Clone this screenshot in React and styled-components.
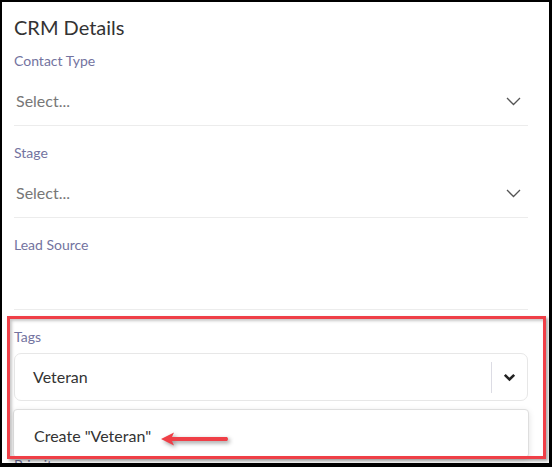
import React from 'react';
import styled, { createGlobalStyle } from 'styled-components';

const GlobalStyle = createGlobalStyle`
  html, body {
    margin: 0;
    padding: 0;
    background: #fff;
  }
  body {
    font-family: Lato, "Noto Sans", sans-serif;
  }
`;

const Frame = styled.div`
  position: relative;
  box-sizing: border-box;
  width: 552px;
  height: 467px;
  overflow: hidden;
  background: #fff;
  border-style: solid;
  border-color: #000;
  border-width: 2px 3px 4px 2px;
  padding: 0 21px 0 12px;
`;

const Title = styled.h2`
  margin: 0 0 14px;
  padding-top: 14px;
  font-size: 20px;
  line-height: 23px;
  font-weight: 400;
  color: #333;
`;

const Field = styled.div`
  position: relative;
  margin-top: ${(p) => p.$gap}px;
`;

const Label = styled.div`
  font-size: 14px;
  line-height: 16px;
  color: #7373a0;
`;

const Control = styled.div`
  display: flex;
  align-items: center;
  justify-content: space-between;
  height: 18px;
  padding: 23px 7px 15px 2px;
  border-bottom: 1px solid #ececec;
`;

const Placeholder = styled.span`
  font-size: 16px;
  line-height: 18px;
  color: #777;
`;

const SelectWrap = styled.div`
  position: relative;
  margin-top: 8px;
`;

const SelectBox = styled.div`
  display: flex;
  align-items: center;
  box-sizing: border-box;
  height: 48px;
  padding-left: 18px;
  border: 1px solid #e7e7e7;
  border-radius: 7px;
  background: #fff;
`;

const Value = styled.span`
  flex: 1;
  font-size: 16px;
  line-height: 18px;
  color: #333;
`;

const Separator = styled.span`
  width: 1px;
  height: 31px;
  background: #dcdce4;
`;

const Indicator = styled.span`
  display: flex;
  align-items: center;
  justify-content: center;
  width: 35px;
`;

const Menu = styled.div`
  position: absolute;
  top: calc(100% + 8px);
  left: -1px;
  right: -1px;
  padding-top: 4px;
  background: #fff;
  border: 1px solid #dedede;
  border-radius: 4px;
  box-shadow: 0 2px 6px rgba(0, 0, 0, 0.12);
  z-index: 2;
`;

const Option = styled.div`
  padding: 13px 20px 12px;
  font-size: 16px;
  line-height: 18px;
  color: #333;
`;

const Highlight = styled.div`
  position: absolute;
  left: 5px;
  top: 314px;
  width: 539px;
  height: 143px;
  box-sizing: border-box;
  border: 3px solid #ef3f47;
  box-shadow: 2px 2px 3px rgba(0, 0, 0, 0.35), inset 2px 2px 3px rgba(0, 0, 0, 0.22);
  pointer-events: none;
  z-index: 3;
`;

const Arrow = styled.svg`
  position: absolute;
  left: 157px;
  top: 427px;
  filter: drop-shadow(2px 2px 2px rgba(0, 0, 0, 0.4));
  z-index: 3;
`;

function ThinChevron() {
  return (
    <svg width="15" height="9" viewBox="0 0 15 9">
      <path d="M1 1 L7.5 7.5 L14 1" fill="none" stroke="#555" strokeWidth="1.3" />
    </svg>
  );
}

function BoldChevron() {
  return (
    <svg width="13" height="9" viewBox="0 0 13 9">
      <path d="M1.8 1.8 L6.5 6.5 L11.2 1.8" fill="none" stroke="#222" strokeWidth="2.6" />
    </svg>
  );
}

function SelectField({ label, placeholder, gap }) {
  return (
    <Field $gap={gap}>
      <Label>{label}</Label>
      <Control>
        <Placeholder>{placeholder}</Placeholder>
        {placeholder && <ThinChevron />}
      </Control>
    </Field>
  );
}

export default function App() {
  return (
    <>
      <GlobalStyle />
      <Frame>
        <Title>CRM Details</Title>
        <SelectField label="Contact Type" placeholder="Select..." gap={0} />
        <SelectField label="Stage" placeholder="Select..." gap={19} />
        <SelectField label="Lead Source" placeholder="" gap={19} />
        <Field $gap={19}>
          <Label>Tags</Label>
          <SelectWrap>
            <SelectBox>
              <Value>Veteran</Value>
              <Separator />
              <Indicator>
                <BoldChevron />
              </Indicator>
            </SelectBox>
            <Menu>
              <Option>Create "Veteran"</Option>
            </Menu>
          </SelectWrap>
        </Field>
        <Field $gap={56}>
          <Label>Priority</Label>
        </Field>
        <Highlight />
        <Arrow width="74" height="20" viewBox="0 0 74 20">
          <path d="M2 10 L15 3.5 L13 8 L68 8 Q70 10 68 12 L13 12 L15 16.5 Z" fill="#ef3f47" />
        </Arrow>
      </Frame>
    </>
  );
}
